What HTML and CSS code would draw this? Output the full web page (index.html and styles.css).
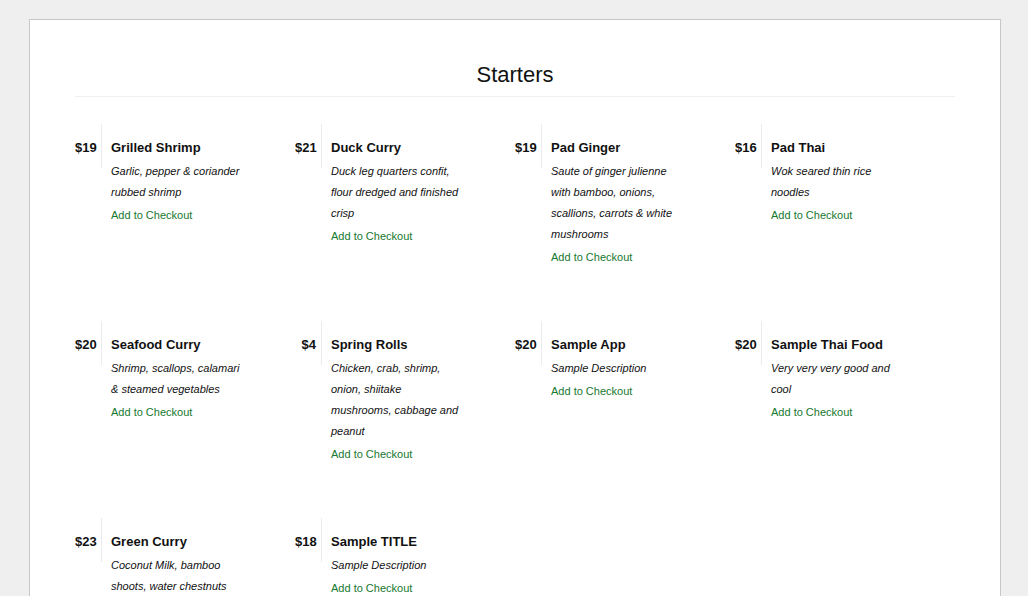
FILE: index.html
```html
<!DOCTYPE html>
<html>
<head>
<meta charset="utf-8">
<link rel="stylesheet" href="styles.css">
</head>
<body>
<div class="card">
  <h1 class="title">Starters</h1>
  <hr class="rule">
  <div class="menu">
    <div class="item"><div class="price">$19</div><div class="body"><div class="name">Grilled Shrimp</div><div class="desc">Garlic, pepper &amp; coriander rubbed shrimp</div><a class="add">Add to Checkout</a></div></div>
    <div class="item"><div class="price">$21</div><div class="body"><div class="name">Duck Curry</div><div class="desc">Duck leg quarters confit, flour dredged and finished crisp</div><a class="add">Add to Checkout</a></div></div>
    <div class="item"><div class="price">$19</div><div class="body"><div class="name">Pad Ginger</div><div class="desc">Saute of ginger julienne with bamboo, onions, scallions, carrots &amp; white mushrooms</div><a class="add">Add to Checkout</a></div></div>
    <div class="item"><div class="price">$16</div><div class="body"><div class="name">Pad Thai</div><div class="desc">Wok seared thin rice noodles</div><a class="add">Add to Checkout</a></div></div>
    <div class="item"><div class="price">$20</div><div class="body"><div class="name">Seafood Curry</div><div class="desc">Shrimp, scallops, calamari &amp; steamed vegetables</div><a class="add">Add to Checkout</a></div></div>
    <div class="item"><div class="price">$4</div><div class="body"><div class="name">Spring Rolls</div><div class="desc">Chicken, crab, shrimp, onion, shiitake mushrooms, cabbage and peanut</div><a class="add">Add to Checkout</a></div></div>
    <div class="item"><div class="price">$20</div><div class="body"><div class="name">Sample App</div><div class="desc">Sample Description</div><a class="add">Add to Checkout</a></div></div>
    <div class="item"><div class="price">$20</div><div class="body"><div class="name">Sample Thai Food</div><div class="desc">Very very very good and cool</div><a class="add">Add to Checkout</a></div></div>
    <div class="item"><div class="price">$23</div><div class="body"><div class="name">Green Curry</div><div class="desc">Coconut Milk, bamboo shoots, water chestnuts</div><a class="add">Add to Checkout</a></div></div>
    <div class="item"><div class="price">$18</div><div class="body"><div class="name">Sample TITLE</div><div class="desc">Sample Description</div><a class="add">Add to Checkout</a></div></div>
  </div>
</div>
</body>
</html>
```
FILE: styles.css
```css
html, body {
  margin: 0;
  padding: 0;
  background: #efefef;
  font-family: "Liberation Sans", Arial, sans-serif;
  color: #111;
}
body {
  padding: 19px 0 0 29px;
}
.card {
  box-sizing: border-box;
  width: 972px;
  min-height: 800px;
  background: #fff;
  border: 1px solid #c8c8c8;
  padding: 41px 45px 40px 45px;
}
.title {
  margin: 0;
  font-size: 22px;
  font-weight: normal;
  line-height: 28px;
  text-align: center;
  color: #111;
}
.rule {
  margin: 7px 0 0 0;
  border: 0;
  border-top: 1px solid #f0f0f0;
  height: 0;
}
.menu {
  margin-top: 27px;
  display: grid;
  grid-template-columns: repeat(4, 220px);
  row-gap: 53px;
}
.item {
  display: flex;
  align-items: flex-start;
}
.price {
  box-sizing: border-box;
  width: 27px;
  height: 44px;
  padding-top: 14px;
  padding-right: 5px;
  line-height: 20px;
  font-size: 13px;
  font-weight: bold;
  text-align: right;
  border-right: 1px solid #ececec;
}
.body {
  padding-left: 9px;
  padding-top: 14px;
}
.name {
  font-size: 13px;
  font-weight: bold;
  line-height: 20px;
}
.desc {
  margin-top: 3px;
  width: 131px;
  font-size: 11px;
  font-style: italic;
  line-height: 21px;
}
.add {
  display: block;
  margin-top: 2px;
  font-size: 11px;
  line-height: 21px;
  color: #17782f;
  text-decoration: none;
}
```
